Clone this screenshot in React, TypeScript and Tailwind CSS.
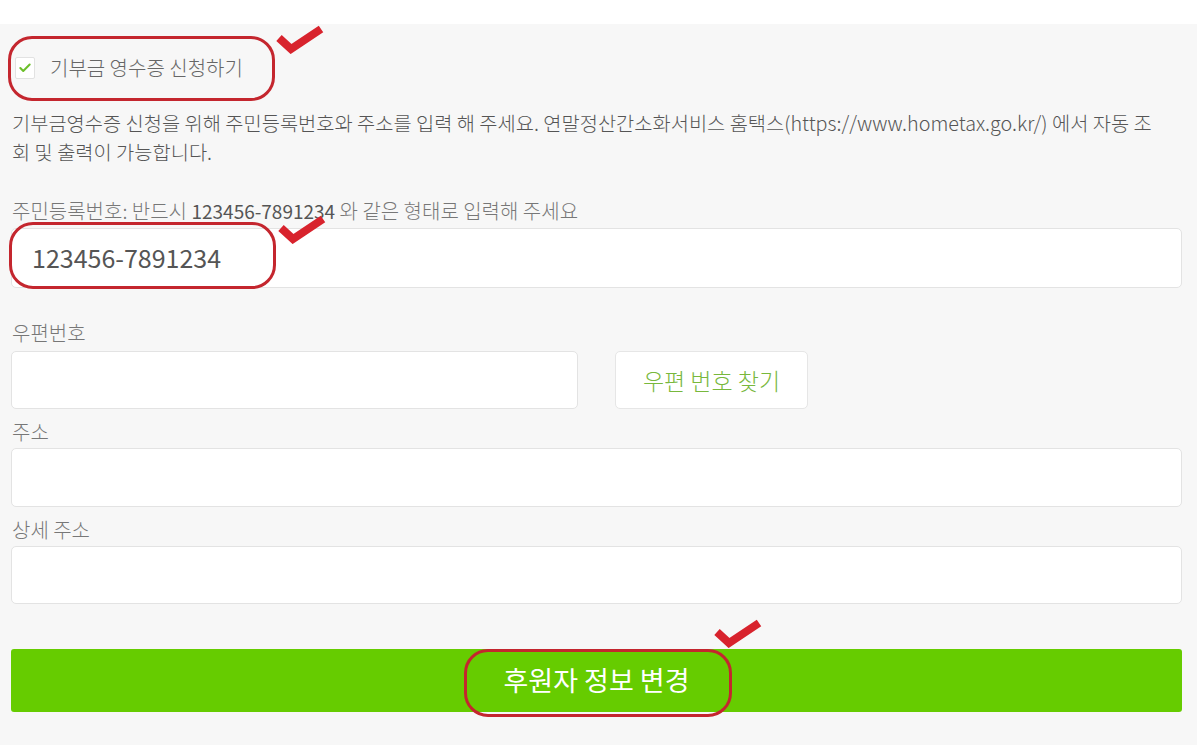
import { Check } from "lucide-react";

const font = { fontFamily: '"Noto Sans CJK KR", "Noto Sans", sans-serif' };

const RedCheck = ({ className }: { className: string }) => (
  <svg className={className} viewBox="0 0 48 30" fill="none">
    <polyline
      points="3,14 15,25 45,5"
      stroke="#d8232d"
      strokeWidth="8"
      strokeLinejoin="miter"
    />
  </svg>
);

const Label = ({ text, className }: { text: string; className: string }) => (
  <p className={`text-[20px] leading-[22px] text-[#777] font-light ${className}`}>{text}</p>
);

const Field = ({ className, value }: { className: string; value?: string }) => (
  <div
    className={`flex items-center bg-white border border-[#e3e3e3] rounded-[5px] pl-[20px] text-[25px] text-[#555] ${className}`}
  >
    {value}
  </div>
);

export default function App() {
  return (
    <div style={font} className="relative w-full min-h-[745px] bg-[#f7f7f7] overflow-hidden">
      <div className="h-[24px] bg-white" />

      <div className="pl-[11px] pr-[15px]">
        <div className="mt-[33px] flex items-center">
          <div className="ml-[4px] w-[20px] h-[22px] bg-white border border-[#e2e2e2] rounded-[2px] flex items-center justify-center">
            <Check className="w-[14px] h-[14px] text-[#6cbf2a]" strokeWidth={3.5} />
          </div>
          <span className="ml-[15px] text-[20px] leading-[22px] text-[#666] font-light">기부금 영수증 신청하기</span>
        </div>

        <p className="mt-[29px] pl-[1px] text-[19.8px] leading-[29px] text-[#555] font-light whitespace-nowrap">
          기부금영수증 신청을 위해 주민등록번호와 주소를 입력 해 주세요. 연말정산간소화서비스 홈택스(https://www.hometax.go.kr/) 에서 자동 조
          <br />
          회 및 출력이 가능합니다.
        </p>

        <p className="mt-[34px] pl-[1px] text-[20px] leading-[22px] text-[#777] font-light">
          주민등록번호: 반드시 <span className="text-[#555] text-[19px] font-normal">123456-7891234</span> 와 같은 형태로 입력해 주세요
        </p>
        <Field className="mt-[6px] h-[60px]" value="123456-7891234" />

        <Label text="우편번호" className="mt-[34px] pl-[1px]" />
        <div className="mt-[7px] flex">
          <Field className="w-[567px] h-[58px]" />
          <div className="ml-[37px] w-[193px] h-[58px] bg-white border border-[#e6e6e6] rounded-[5px] flex items-center justify-center text-[23px] text-[#78b83c] font-light">
            우편 번호 찾기
          </div>
        </div>

        <Label text="주소" className="mt-[12px] pl-[1px]" />
        <Field className="mt-[5px] h-[59px]" />

        <Label text="상세 주소" className="mt-[12px] pl-[1px]" />
        <Field className="mt-[5px] h-[58px]" />

        <div className="mt-[45px] h-[63px] bg-[#66cc00] rounded-[3px] flex items-center justify-center text-[27px] text-white">
          후원자 정보 변경
        </div>
      </div>

      {/* red annotations */}
      <div className="absolute left-[8px] top-[36px] w-[267px] h-[65px] border-[3px] border-[#c4262e] rounded-[24px]" />
      <RedCheck className="absolute left-[276px] top-[24px] w-[48px] h-[30px]" />
      <div className="absolute left-[9px] top-[222px] w-[267px] h-[67px] border-[3px] border-[#c4262e] rounded-[24px]" />
      <RedCheck className="absolute left-[278px] top-[214px] w-[48px] h-[30px]" />
      <div className="absolute left-[464px] top-[649px] w-[268px] h-[68px] border-[3px] border-[#c4262e] rounded-[24px]" />
      <RedCheck className="absolute left-[714px] top-[618px] w-[48px] h-[30px]" />
    </div>
  );
}
